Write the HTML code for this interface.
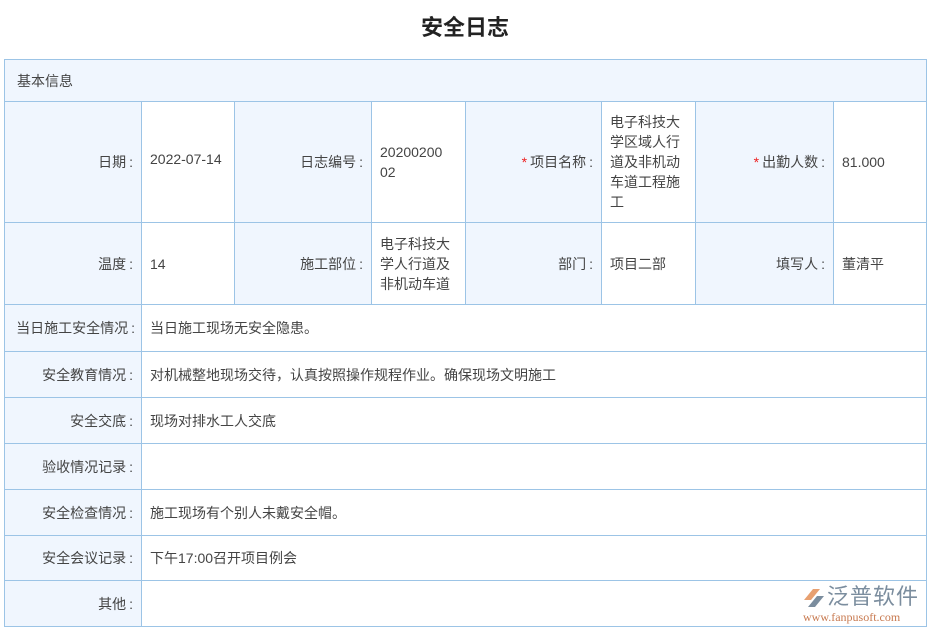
<!DOCTYPE html><html><head><meta charset="utf-8"><style>
body{margin:0;width:930px;height:632px;background:#fff;font-family:"Liberation Sans","Noto Sans CJK SC",sans-serif;color:#444;font-size:14px;position:relative;overflow:hidden}
h1{position:absolute;top:10px;left:0;width:930px;text-align:center;margin:0;font-size:22px;font-weight:bold;color:#222}
.c{position:absolute;box-sizing:border-box;border:1px solid #9cc4e6;display:flex;align-items:center;line-height:20px}
.l{background:#f0f6fe;justify-content:flex-end;padding-right:8px;text-align:right}
.v{background:#fff;padding-left:8px;padding-right:6px}
.s{color:#e22;margin-right:3px}
.k{margin-left:3px}
</style></head><body>
<h1>安全日志</h1>
<div class="c" style="left:4px;top:59px;width:923px;height:43px;background:#f0f6fe;padding-left:12px">基本信息</div>

<div class="c l" style="left:4px;top:101px;width:138px;height:122px">日期<span class="k">:</span></div>
<div class="c v" style="left:141px;top:101px;width:94px;height:122px;align-items:flex-start;padding-top:47px">2022-07-14</div>
<div class="c l" style="left:234px;top:101px;width:138px;height:122px">日志编号<span class="k">:</span></div>
<div class="c v" style="left:371px;top:101px;width:95px;height:122px;word-break:break-all;padding-right:18px">2020020002</div>
<div class="c l" style="left:465px;top:101px;width:137px;height:122px"><span class="s">*</span>项目名称<span class="k">:</span></div>
<div class="c v" style="left:601px;top:101px;width:95px;height:122px">电子科技大学区域人行道及非机动车道工程施工</div>
<div class="c l" style="left:695px;top:101px;width:139px;height:122px"><span class="s">*</span>出勤人数<span class="k">:</span></div>
<div class="c v" style="left:833px;top:101px;width:94px;height:122px">81.000</div>

<div class="c l" style="left:4px;top:222px;width:138px;height:83px">温度<span class="k">:</span></div>
<div class="c v" style="left:141px;top:222px;width:94px;height:83px">14</div>
<div class="c l" style="left:234px;top:222px;width:138px;height:83px">施工部位<span class="k">:</span></div>
<div class="c v" style="left:371px;top:222px;width:95px;height:83px">电子科技大学人行道及非机动车道</div>
<div class="c l" style="left:465px;top:222px;width:137px;height:83px">部门<span class="k">:</span></div>
<div class="c v" style="left:601px;top:222px;width:95px;height:83px">项目二部</div>
<div class="c l" style="left:695px;top:222px;width:139px;height:83px">填写人<span class="k">:</span></div>
<div class="c v" style="left:833px;top:222px;width:94px;height:83px">董清平</div>

<div class="c l" style="left:4px;top:304px;width:138px;height:48px;padding-right:6px">当日施工安全情况<span class="k">:</span></div>
<div class="c v" style="left:141px;top:304px;width:786px;height:48px">当日施工现场无安全隐患。</div>
<div class="c l" style="left:4px;top:351px;width:138px;height:47px">安全教育情况<span class="k">:</span></div>
<div class="c v" style="left:141px;top:351px;width:786px;height:47px">对机械整地现场交待，认真按照操作规程作业。确保现场文明施工</div>
<div class="c l" style="left:4px;top:397px;width:138px;height:47px">安全交底<span class="k">:</span></div>
<div class="c v" style="left:141px;top:397px;width:786px;height:47px">现场对排水工人交底</div>
<div class="c l" style="left:4px;top:443px;width:138px;height:47px">验收情况记录<span class="k">:</span></div>
<div class="c v" style="left:141px;top:443px;width:786px;height:47px"></div>
<div class="c l" style="left:4px;top:489px;width:138px;height:47px">安全检查情况<span class="k">:</span></div>
<div class="c v" style="left:141px;top:489px;width:786px;height:47px">施工现场有个别人未戴安全帽。</div>
<div class="c l" style="left:4px;top:535px;width:138px;height:46px">安全会议记录<span class="k">:</span></div>
<div class="c v" style="left:141px;top:535px;width:786px;height:46px">下午17:00召开项目例会</div>
<div class="c l" style="left:4px;top:580px;width:138px;height:47px">其他<span class="k">:</span></div>
<div class="c v" style="left:141px;top:580px;width:786px;height:47px"></div>

<div style="position:absolute;left:802px;top:584px;width:125px;height:42px">
<svg width="24" height="22" style="position:absolute;left:0;top:3px" viewBox="0 0 24 22"><path d="M2 13 L11 2 L18 2 L9 13 Z" fill="#e8a070"/><path d="M6 20 L15 9 L22 9 L13 20 Z" fill="#7b8d9e"/></svg>
<div style="position:absolute;left:25px;top:0;font-size:22px;color:#7b8d9e;letter-spacing:1px;line-height:26px">泛普软件</div>
<div style="position:absolute;left:1px;top:26px;font-family:'Liberation Serif',serif;font-size:12px;color:#c87a50;line-height:14px">www.fanpusoft.com</div>
</div>
</body></html>
